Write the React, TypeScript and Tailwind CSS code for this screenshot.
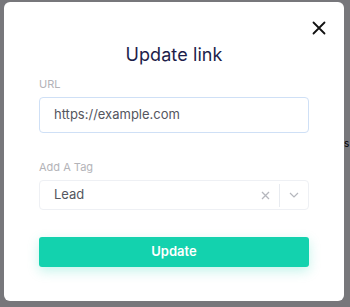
import React from "react";

export default function App() {
  return (
    <div className="w-[350px] h-[307px] bg-[#77777b] pt-[2px] pl-[4px] overflow-hidden relative" style={{ fontFamily: "Inter, 'Noto Sans', sans-serif" }}>
      <div className="absolute right-0 top-[136px] w-[6px] text-[10px] text-black overflow-hidden">s</div>
      <div className="w-[340px] h-[299px] bg-white rounded-[6px] relative flex flex-col">
        <button className="absolute left-[307px] top-[18px] w-[16px] h-[16px] flex items-center justify-center">
          <svg width="14" height="14" viewBox="0 0 14 14">
            <path d="M1.5 1.5 L12.5 12.5 M12.5 1.5 L1.5 12.5" stroke="#111" strokeWidth="1.8" strokeLinecap="round" />
          </svg>
        </button>
        <h2 className="mt-[41px] text-center text-[18px] leading-[24px] text-[#1d1e4a] font-normal tracking-[0.1px]">Update link</h2>
        <div className="px-[35px] mt-[10px]">
          <label className="block text-[11px] leading-[14px] text-[#b3b3b8]">URL</label>
          <div className="mt-[6px] h-[36px] border border-[#cfe0f6] rounded-[4px] flex items-center pl-[14px] text-[13px] text-[#55565e]">
            https://example.com
          </div>
          <label className="block mt-[27px] text-[11px] leading-[14px] text-[#b3b3b8]">Add A Tag</label>
          <div className="mt-[6px] h-[30px] border border-[#eef0f4] rounded-[4px] flex items-center pl-[14px] text-[13px] text-[#55565e]">
            <span className="flex-1">Lead</span>
            <svg width="9" height="9" viewBox="0 0 9 9" className="mr-[9px]">
              <path d="M1 1 L8 8 M8 1 L1 8" stroke="#b5b7bd" strokeWidth="1.3" />
            </svg>
            <div className="w-px h-[23px] bg-[#e8ebf0]" />
            <svg width="10" height="6" viewBox="0 0 10 6" className="mx-[9px]">
              <path d="M1 1 L5 5 L9 1" stroke="#b5b7bd" strokeWidth="1.2" fill="none" />
            </svg>
          </div>
          <button className="mt-[27px] w-full h-[30px] bg-[#13d2ae] rounded-[3px] text-white text-[13px] font-semibold shadow-[0_4px_12px_rgba(19,210,174,0.25)]">
            Update
          </button>
        </div>
      </div>
    </div>
  );
}
